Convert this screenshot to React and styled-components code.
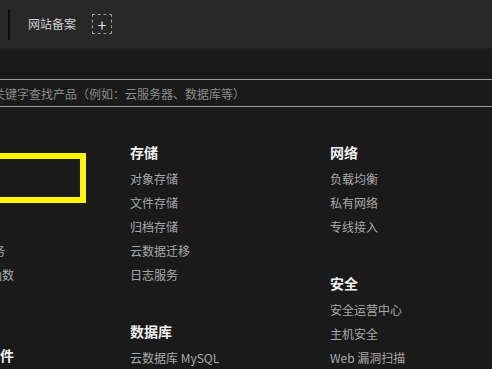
import React from "react";
import styled, { createGlobalStyle } from "styled-components";

const GlobalStyle = createGlobalStyle`
  html, body {
    margin: 0;
    padding: 0;
    background: #1a1a1a;
    overflow: hidden;
  }
  body {
    font-family: "Noto Sans CJK SC", "Noto Sans", sans-serif;
  }
`;

const TopBar = styled.div`
  height: 48px;
  background: #272727;
  border-bottom: 2px solid #1f1f1f;
  display: flex;
  align-items: center;
  padding-left: 8px;
`;

const Divider = styled.span`
  width: 2px;
  height: 31px;
  background: #0e0e0e;
  margin-right: 18px;
`;

const TabLabel = styled.span`
  font-size: 12px;
  color: #cfcfcf;
  line-height: 16px;
`;

const AddButton = styled.span`
  margin-left: 16px;
  width: 18px;
  height: 18px;
  border: 1px dashed #9a9a9a;
  display: flex;
  align-items: center;
  justify-content: center;
  color: #e0e0e0;
  font-size: 16px;
  line-height: 1;
`;

const Spacer = styled.div`
  height: 23px;
  border-bottom: 1px solid #121212;
  margin-bottom: 5px;
`;

const Panel = styled.div`
  margin-left: -70px;
  width: 700px;
`;

const Search = styled.div`
  height: 26px;
  border-top: 1px solid #9a9a9a;
  border-bottom: 1px solid #9a9a9a;
  display: flex;
  align-items: center;
  padding-left: 27px;
  font-size: 12px;
  color: #8a8a8a;
  white-space: nowrap;
`;

const Columns = styled.div`
  display: grid;
  grid-template-columns: repeat(3, 200px);
  padding-top: 35px;
`;

const Column = styled.div`
  position: relative;
  display: flex;
  flex-direction: column;
  gap: 34px;
`;

const Group = styled.div`
  display: flex;
  flex-direction: column;
`;

const Heading = styled.div`
  font-size: 14px;
  font-weight: 700;
  line-height: 20px;
  color: #f0f0f0;
  margin-bottom: 5px;
  white-space: nowrap;
`;

const Item = styled.div`
  font-size: 12px;
  line-height: 24px;
  color: #a8a8a8;
  white-space: nowrap;
`;

const Highlight = styled.div`
  position: absolute;
  left: -10px;
  top: 11px;
  width: 154px;
  height: 38px;
  border: 6px solid #fff700;
`;

const columns = [
  [
    {
      title: "计算",
      items: ["云服务器", "专用宿主机", "弹性伸缩", "GPU 计算服务", "无服务器云函数", "批量计算"],
    },
    { title: "容器与中间件", items: ["容器服务"] },
  ],
  [
    { title: "存储", items: ["对象存储", "文件存储", "归档存储", "云数据迁移", "日志服务"] },
    { title: "数据库", items: ["云数据库 MySQL"] },
  ],
  [
    { title: "网络", items: ["负载均衡", "私有网络", "专线接入"] },
    { title: "安全", items: ["安全运营中心", "主机安全", "Web 漏洞扫描"] },
  ],
];

export default function App() {
  return (
    <>
      <GlobalStyle />
      <TopBar>
        <Divider />
        <TabLabel>网站备案</TabLabel>
        <AddButton>+</AddButton>
      </TopBar>
      <Spacer />
      <Panel>
        <Search>请输入关键字查找产品（例如：云服务器、数据库等）</Search>
        <Columns>
          {columns.map((groups, ci) => (
            <Column key={ci}>
              {ci === 0 && <Highlight />}
              {groups.map((g) => (
                <Group key={g.title}>
                  <Heading>{g.title}</Heading>
                  {g.items.map((it) => (
                    <Item key={it}>{it}</Item>
                  ))}
                </Group>
              ))}
            </Column>
          ))}
        </Columns>
      </Panel>
    </>
  );
}
